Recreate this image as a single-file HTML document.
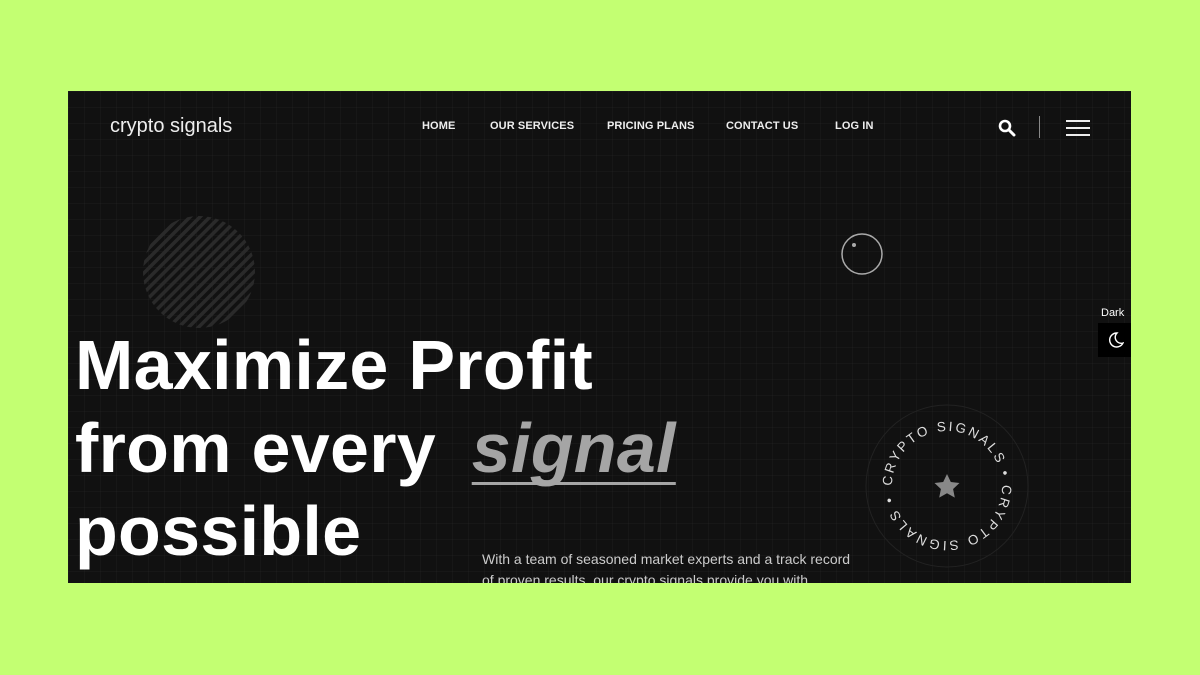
<!DOCTYPE html>
<html><head><style>
body{margin:0;width:1200px;height:675px;background:#c3ff72;position:relative;overflow:hidden;font-family:"Liberation Sans",sans-serif}
.panel{position:absolute;left:68px;top:91px;width:1063px;height:492px;background-color:#111;
background-image:linear-gradient(rgba(255,255,255,.025) 1px,transparent 1px),linear-gradient(90deg,rgba(255,255,255,.025) 1px,transparent 1px);background-size:16px 16px;overflow:hidden}
.abs{position:absolute}
.logo{left:42px;top:24px;color:#eee;font-size:20px}
.nav{top:29px;color:#eee;font-size:11px;font-weight:bold;letter-spacing:.1px}
h1{position:absolute;left:7px;top:233px;margin:0;color:#fff;font-size:70px;font-weight:bold;line-height:83px;letter-spacing:.3px}
.sig{color:#a5a5a5;font-style:italic;text-decoration:underline;text-decoration-thickness:3px;text-underline-offset:10px;text-decoration-skip-ink:none;margin-left:16px}
.p{left:414px;top:458px;color:#ccc;font-size:14px;line-height:21px;width:380px}
</style></head><body>
<div class="panel">
<div class="abs logo">crypto signals</div>
<div class="abs nav" style="left:354px">HOME</div>
<div class="abs nav" style="left:422px">OUR SERVICES</div>
<div class="abs nav" style="left:539px">PRICING PLANS</div>
<div class="abs nav" style="left:658px">CONTACT US</div>
<div class="abs nav" style="left:767px">LOG IN</div>
<svg class="abs" style="left:930px;top:28px" width="18" height="18" viewBox="0 0 18 18"><circle cx="7" cy="7" r="5" fill="none" stroke="#fff" stroke-width="2.6"/><path d="M11 11l5 5" stroke="#fff" stroke-width="3" stroke-linecap="round"/></svg>
<div class="abs" style="left:971px;top:25px;width:1px;height:22px;background:#888"></div>
<div class="abs" style="left:998px;top:29px;width:24px;height:2px;background:#eee;box-shadow:0 7px 0 #eee,0 14px 0 #eee"></div>
<svg class="abs" style="left:73px;top:123px" width="116" height="116"><defs><pattern id="st" width="7" height="7" patternUnits="userSpaceOnUse" patternTransform="rotate(45)"><rect width="3.5" height="7" fill="#2a2a2a"/></pattern></defs><circle cx="58" cy="58" r="56" fill="url(#st)"/></svg>
<svg class="abs" style="left:772px;top:141px" width="44" height="44"><circle cx="22" cy="22" r="20" fill="none" stroke="#aaa" stroke-width="1.5"/><circle cx="14" cy="13" r="2" fill="#aaa"/></svg>
<h1>Maximize Profit<br>from every <span class="sig">signal</span><br>possible</h1>
<div class="abs p">With a team of seasoned market experts and a track record of proven results, our crypto signals provide you with</div>
<svg class="abs" style="left:797px;top:313px" width="164" height="164" viewBox="0 0 164 164">
<circle cx="82" cy="82" r="81" fill="none" stroke="#222"/>
<defs><path id="cp" d="M82,82 m-55,0 a55,55 0 1,1 110,0 a55,55 0 1,1 -110,0"/></defs>
<text fill="#ddd" font-size="13.5" letter-spacing="2.4" font-family="Liberation Sans,sans-serif"><textPath href="#cp" startOffset="0">CRYPTO  SIGNALS • CRYPTO SIGNALS •</textPath></text>
<path d="M82 70l3.8 8 8.7 1-6.4 6 1.7 8.6-7.8-4.3-7.8 4.3 1.7-8.6-6.4-6 8.7-1z" fill="#888"/>
</svg>
</div>
<div class="abs" style="left:1101px;top:307px;color:#fff;font-size:11px">Dark</div>
<div class="abs" style="left:1098px;top:323px;width:33px;height:34px;background:#000"></div>
<svg class="abs" style="left:1106px;top:331px" width="18" height="18" viewBox="0 0 18 18"><path d="M11 2a7 7 0 1 0 6 10a6 6 0 0 1-6-10z" fill="none" stroke="#fff" stroke-width="1.4"/></svg>
</body></html>
